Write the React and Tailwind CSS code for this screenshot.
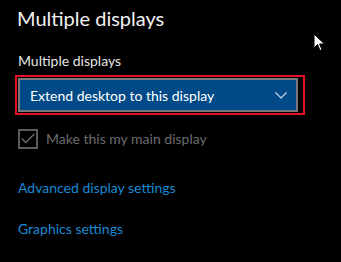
import { useState } from "react";

function Cursor() {
  return (
    <svg className="absolute left-[313px] top-[33px]" width="14" height="20" viewBox="0 0 14 20">
      <path d="M1 1 L1 15 L4.5 11.5 L7 17.5 L9 16.7 L6.6 11 L11.5 11 Z" fill="#ffffff" stroke="#000000" strokeWidth="1" />
    </svg>
  );
}

export default function App() {
  const [main, setMain] = useState(true);

  return (
    <div className="relative w-[341px] h-[262px] bg-black overflow-hidden font-['Lato',sans-serif]">
      <div className="pl-[17px] pt-[4px]">
        <h1 className="text-[20px] leading-[28px] text-[#f2f2f2]">Multiple displays</h1>

        <div className="mt-[20px] pl-[1px] text-[14px] leading-[18px] text-[#e6e6e6]">Multiple displays</div>

        <div className="mt-[5px] -ml-[2px] w-[290px] h-[40px] border-2 border-[#e81123] pt-[1px] pl-[1px]">
          <button className="flex items-center justify-between w-[280px] h-[34px] border-2 border-[#7a7a7a] bg-[#004b87] pl-[10px] pr-[9px] text-[14px] text-white">
            <span>Extend desktop to this display</span>
            <svg width="12" height="7" viewBox="0 0 12 7">
              <path d="M0.5 0.5 L6 6 L11.5 0.5" fill="none" stroke="#d0d8e4" strokeWidth="1.2" />
            </svg>
          </button>
        </div>

        <label className="mt-[13px] ml-[1px] flex items-center gap-[8px] text-[14px] text-[#6b6b6b]" onClick={() => setMain(!main)}>
          <span className="flex items-center justify-center w-[20px] h-[20px] border-2 border-[#5c5c5c]">
            {main && (
              <svg width="14" height="11" viewBox="0 0 14 11">
                <path d="M0.8 5.5 L4.8 9.5 L13.2 1" fill="none" stroke="#6b6b6b" strokeWidth="1.4" />
              </svg>
            )}
          </span>
          <span>Make this my main display</span>
        </label>

        <div className="mt-[29px] ml-[1px] text-[14px] leading-[20px] text-[#1a8ad4]">Advanced display settings</div>
        <div className="mt-[21px] ml-[1px] text-[14px] leading-[20px] text-[#1a8ad4]">Graphics settings</div>
      </div>
      <Cursor />
    </div>
  );
}
